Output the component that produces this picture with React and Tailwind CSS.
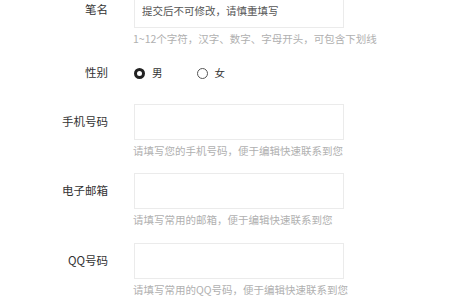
import React, { useState } from "react";

const fields = [
  { label: "手机号码", hint: "请填写您的手机号码，便于编辑快速联系到您", gap: "mt-[21px]" },
  { label: "电子邮箱", hint: "请填写常用的邮箱，便于编辑快速联系到您", gap: "mt-[15px]" },
  { label: "QQ号码", hint: "请填写常用的QQ号码，便于编辑快速联系到您", gap: "mt-[16px]" },
];

function Radio({ checked, label, onClick }) {
  return (
    <label className="flex items-center cursor-pointer" onClick={onClick}>
      <span
        className={
          checked
            ? "w-[11px] h-[11px] rounded-full border-[3px] border-[#222] bg-white"
            : "w-[11px] h-[11px] rounded-full border border-[#555] bg-white"
        }
      />
      <span className="ml-[7px] text-[10.5px] text-[#333]">{label}</span>
    </label>
  );
}

function Field({ label, hint, value, placeholder, className }) {
  return (
    <div className={"flex flex-col " + (className || "")}>
      <div className="flex items-center">
        <div className="w-[108px] text-right text-[11.5px] text-[#333]">{label}</div>
        <input
          className="ml-[26px] w-[210px] h-[36px] border border-[#ebebeb] px-[7px] text-[10.5px] text-[#555] outline-none"
          defaultValue={value}
          placeholder={placeholder}
        />
      </div>
      <div className="ml-[133px] mt-[4px] h-[14px] leading-[14px] text-[10.5px] text-[#b0b0b0] whitespace-nowrap">
        {hint}
      </div>
    </div>
  );
}

export default function App() {
  const [sex, setSex] = useState("male");

  return (
    <div
      className="w-[450px] h-[300px] overflow-hidden bg-white"
      style={{ fontFamily: '"Noto Sans CJK SC", "Noto Sans", sans-serif' }}
    >
      <div className="-mt-[8px] flex flex-col">
        <Field
          label="笔名"
          value="提交后不可修改，请慎重填写"
          hint="1~12个字符，汉字、数字、字母开头，可包含下划线"
        />

        <div className="mt-[17px] h-[20px] flex items-center">
          <div className="w-[108px] text-right text-[11.5px] text-[#333]">性别</div>
          <div className="ml-[26px] flex items-center gap-[34px]">
            <Radio checked={sex === "male"} label="男" onClick={() => setSex("male")} />
            <Radio checked={sex === "female"} label="女" onClick={() => setSex("female")} />
          </div>
        </div>

        {fields.map((f) => (
          <Field key={f.label} className={f.gap} label={f.label} hint={f.hint} />
        ))}
      </div>
    </div>
  );
}
